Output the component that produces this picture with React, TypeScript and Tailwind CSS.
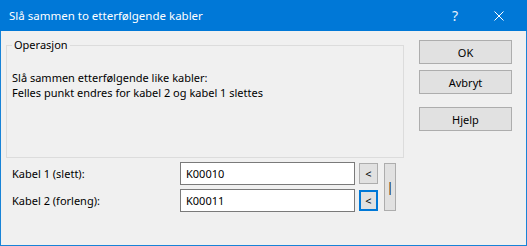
import React from "react";

const font = "font-['Noto_Sans','Segoe_UI',sans-serif]";

function WinButton({ children, className = "" }: { children: React.ReactNode; className?: string }) {
  return (
    <button
      className={`w-[93px] h-[24px] bg-[#e1e1e1] border border-[#adadad] text-[11px] text-black flex items-center justify-center ${className}`}
    >
      {children}
    </button>
  );
}

export default function App() {
  return (
    <div className={`w-[527px] h-[246px] flex flex-col bg-[#1883d7] ${font} text-[11px] leading-[15px] text-black`}>
      {/* Title bar */}
      <div className="h-[31px] shrink-0 bg-[#0078d7] flex items-center text-white">
        <div className="pl-[9px] text-[11.5px]">Slå sammen to etterfølgende kabler</div>
        <div className="flex-1" />
        <div className="w-[46px] flex justify-center text-[14px] text-[#e8f1fb] mr-[16px]">?</div>
        <div className="w-[10px] mr-[23px] flex items-center">
          <svg width="10" height="10" viewBox="0 0 10 10" fill="none">
            <path d="M0.5 0.5 L9.5 9.5 M9.5 0.5 L0.5 9.5" stroke="#ffffff" strokeWidth="1" />
          </svg>
        </div>
      </div>

      {/* Body */}
      <div className="flex-1 mx-[1px] mb-[1px] bg-[#f0f0f0] flex">
        {/* Left column */}
        <div className="w-[403px] pl-[5px] flex flex-col">
          <fieldset className="mt-[6px] w-[398px] h-[121px] border border-[#dcdcdc] pl-[5px] pt-[17px]">
            <legend className="px-[2px] leading-[16px]">Operasjon</legend>
            <div>Slå sammen etterfølgende like kabler:</div>
            <div>Felles punkt endres for kabel 2 og kabel 1 slettes</div>
          </fieldset>

          <div className="mt-[4px] flex items-start">
            <div className="flex flex-col gap-[4px]">
              <div className="flex items-center h-[23px]">
                <div className="w-[174px] pl-[6px]">Kabel 1 (slett):</div>
                <div className="w-[175px] h-[23px] bg-white border border-[#7a7a7a] pl-[5px] flex items-center">K00010</div>
              </div>
              <div className="flex items-center h-[23px]">
                <div className="w-[174px] pl-[6px]">Kabel 2 (forleng):</div>
                <div className="w-[175px] h-[23px] bg-white border border-[#7a7a7a] pl-[5px] flex items-center">K00011</div>
              </div>
            </div>
            <div className="ml-[4px] mt-[1px] flex flex-col gap-[6px]">
              <button className="w-[19px] h-[21px] bg-[#e1e1e1] border border-[#adadad] flex items-center justify-center text-[11px]">&lt;</button>
              <button className="w-[19px] h-[21px] bg-[#e1e1e1] border-2 border-[#0078d7] flex items-center justify-center text-[11px]">&lt;</button>
            </div>
            <button className="ml-[6px] mt-[1px] w-[12px] h-[48px] bg-[#e1e1e1] border border-[#adadad] flex items-center justify-center text-[12px]">|</button>
          </div>
        </div>

        {/* Right column */}
        <div className="pl-[15px] pt-[9px] flex flex-col">
          <WinButton>OK</WinButton>
          <WinButton className="mt-[6px]">Avbryt</WinButton>
          <WinButton className="mt-[13px]">Hjelp</WinButton>
        </div>
      </div>
    </div>
  );
}
